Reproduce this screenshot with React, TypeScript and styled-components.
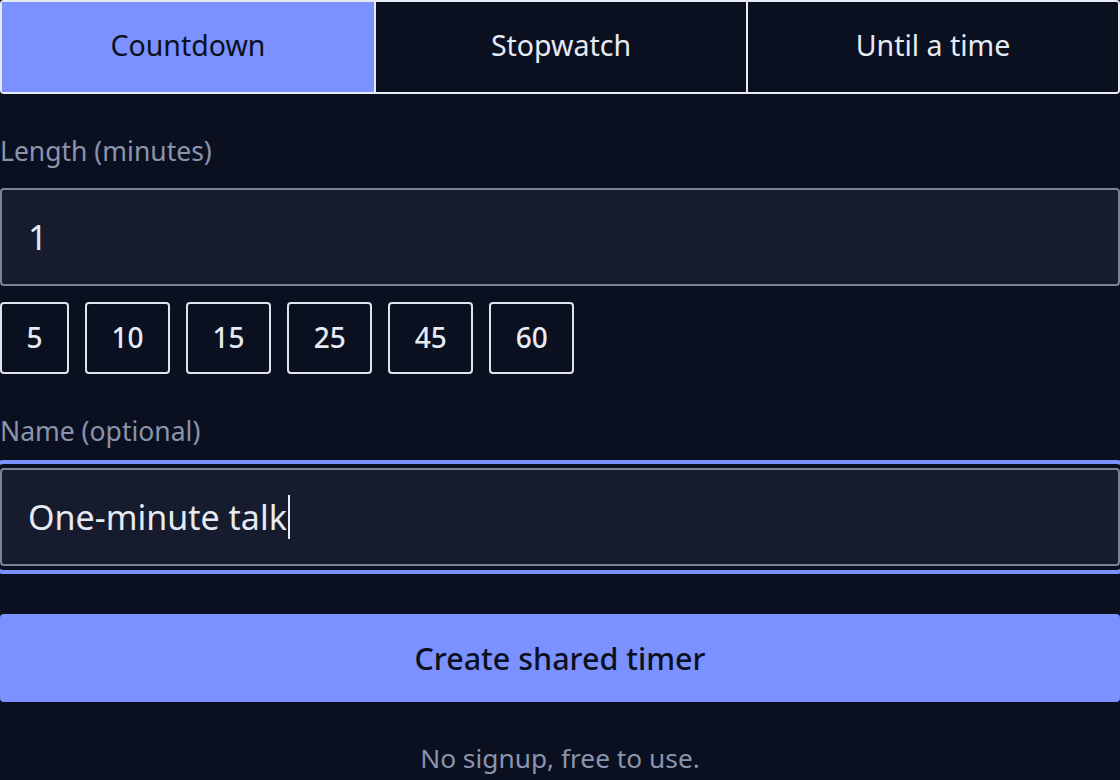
import React from "react";
import styled, { createGlobalStyle } from "styled-components";

const Global = createGlobalStyle`
  html, body {
    margin: 0;
    padding: 0;
    background: #0b1020;
  }
  body {
    font-family: "Noto Sans", "Open Sans", sans-serif;
    color: #e6eaf3;
  }
  * { box-sizing: border-box; }
`;

const Page = styled.div`
  width: 1120px;
  min-height: 780px;
  background: #0b1020;
  display: flex;
  flex-direction: column;
  overflow: hidden;
`;

const Tabs = styled.div`
  display: grid;
  grid-template-columns: 1fr 1fr 1fr;
  height: 94px;
  border: 2px solid #e6eaf3;
  border-radius: 4px;
  overflow: hidden;
`;

const Tab = styled.button<{ $active?: boolean }>`
  font-family: inherit;
  font-size: 28.5px;
  font-weight: 400;
  border: none;
  border-left: 2px solid #e6eaf3;
  &:first-child { border-left: none; }
  background: ${(p) => (p.$active ? "#7b91ff" : "#0b1020")};
  color: ${(p) => (p.$active ? "#0b1020" : "#e6eaf3")};
  display: flex;
  align-items: center;
  justify-content: center;
  padding: 0 0 4px;
`;

const Label = styled.div<{ $top: number }>`
  margin-top: ${(p) => p.$top}px;
  font-size: 26.5px;
  line-height: 36px;
  color: #8a94ad;
`;

const InputWrap = styled.div<{ $focused?: boolean }>`
  margin-top: 19px;
  height: 98px;
  border: 2px solid #7c8294;
  border-radius: 4px;
  background: #161b2e;
  display: flex;
  align-items: center;
  padding-left: 26px;
  font-size: 34px;
  color: #e6eaf3;
  ${(p) =>
    p.$focused
      ? `box-shadow: 0 0 0 4px #0b1020, 0 0 0 8px #7b91ff;`
      : ""}
`;

const Caret = styled.span`
  display: inline-block;
  width: 2px;
  height: 44px;
  background: #e6eaf3;
  margin-left: 1px;
`;

const Presets = styled.div`
  margin-top: 16px;
  display: flex;
  gap: 16px;
`;

const Preset = styled.button`
  font-family: inherit;
  height: 72px;
  padding: 0 24.5px 2px;
  border: 2px solid #dfe3ee;
  border-radius: 4px;
  background: #0b1020;
  color: #e6eaf3;
  font-size: 28px;
  font-weight: 500;
`;

const Submit = styled.button`
  margin-top: 48px;
  height: 88px;
  border: none;
  border-radius: 4px;
  background: #7b91ff;
  color: #0b1020;
  font-family: inherit;
  font-size: 30.5px;
  font-weight: 500;
`;

const Note = styled.div`
  margin-top: 38px;
  text-align: center;
  font-size: 26.3px;
  line-height: 36px;
  color: #8a94ad;
`;

export default function App() {
  return (
    <Page>
      <Global />
      <Tabs>
        <Tab $active>Countdown</Tab>
        <Tab>Stopwatch</Tab>
        <Tab>Until a time</Tab>
      </Tabs>
      <Label $top={39}>Length (minutes)</Label>
      <InputWrap>1</InputWrap>
      <Presets>
        {[5, 10, 15, 25, 45, 60].map((n) => (
          <Preset key={n}>{n}</Preset>
        ))}
      </Presets>
      <Label $top={39}>Name (optional)</Label>
      <InputWrap $focused>
        One-minute talk
        <Caret />
      </InputWrap>
      <Submit>Create shared timer</Submit>
      <Note>No signup, free to use.</Note>
    </Page>
  );
}
